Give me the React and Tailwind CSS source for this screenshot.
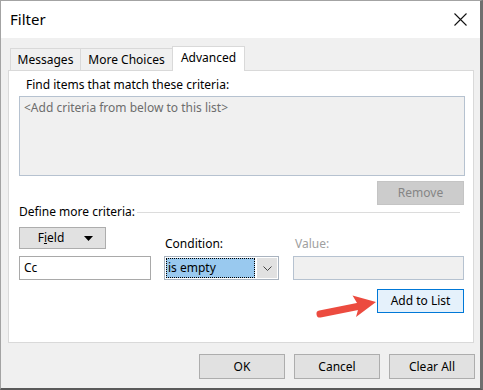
import React from 'react';

const BTN = 'flex items-center justify-center border border-[#adadad] bg-[#e1e1e1] text-black';

function CloseIcon() {
  return (
    <svg width="13" height="13" viewBox="0 0 13 13">
      <path d="M0.5 0.5 L12.5 12.5 M12.5 0.5 L0.5 12.5" stroke="#111" strokeWidth="1.1" />
    </svg>
  );
}

function RedArrow() {
  return (
    <svg
      className="absolute left-[309px] top-[289px]"
      width="70"
      height="30"
      viewBox="0 0 70 30"
    >
      <path d="M10 24 L50 16" stroke="#ec4b3f" strokeWidth="7" strokeLinecap="round" />
      <path d="M66 12 L46 27 L49 16.3 L42.5 5.5 Z" fill="#ec4b3f" />
    </svg>
  );
}

export default function App() {
  return (
    <div className="relative w-[483px] h-[390px] flex flex-col bg-[#f0f0f0] border-l border-t border-[#a3a3a3] border-r-[3px] border-r-[#6f6f6f] border-b-2 border-b-[#5a5a5a] font-['Noto_Sans',sans-serif] text-[12px] text-black overflow-hidden">
      {/* title bar */}
      <div className="h-[37px] shrink-0 bg-white flex items-center justify-between pl-[9px] pr-[13px]">
        <span className="text-[15px] leading-none">Filter</span>
        <CloseIcon />
      </div>

      {/* tabs */}
      <div className="h-[32px] shrink-0 flex items-end pl-[9px]">
        <div className="w-[70px] h-[22px] border-l border-t border-[#d9d9d9] flex items-center justify-center">
          Messages
        </div>
        <div className="w-[92px] h-[22px] border-l border-t border-[#d9d9d9] flex items-center justify-center">
          More Choices
        </div>
        <div className="relative z-10 -mb-px w-[73px] h-[25px] border-l border-t border-r border-[#d9d9d9] bg-white flex items-start justify-center pt-[2px]">
          Advanced
        </div>
      </div>

      {/* tab panel */}
      <div className="ml-[7px] w-[466px] h-[273px] shrink-0 border border-[#d9d9d9] bg-white flex flex-col">
        <div className="mt-[6px] ml-[17px] leading-[16px]">Find items that match these criteria:</div>
        <div className="mt-[3px] ml-[10px] w-[446px] h-[80px] border border-[#b6c2d0] bg-[#f0f0f0] pl-[4px] pt-[3px] text-[#6d6d6d] leading-[16px]">
          &lt;Add criteria from below to this list&gt;
        </div>
        <div className="self-end mt-[5px] mr-[9px] w-[87px] h-[24px] flex items-center justify-center border border-[#c4c4c4] bg-[#cccccc] text-[#858585]">
          Remove
        </div>

        <div className="h-[14px] mt-0 ml-[10px] mr-[13px] flex items-center gap-[2px] leading-[14px]">
          <span>Define more criteria:</span>
          <div className="flex-1 h-px bg-[#dcdcdc]" />
        </div>

        <div className="mt-[8px] ml-[10px] flex">
          <div className="w-[132px] flex flex-col">
            <div className="h-[25px]">
              <div className={`${BTN} w-[87px] h-[22px] gap-[20px] pl-[6px]`}>
                <span>
                  F<span className="underline">i</span>eld
                </span>
                <svg width="9" height="5" viewBox="0 0 9 5">
                  <path d="M0 0 L9 0 L4.5 5 Z" fill="#000" />
                </svg>
              </div>
            </div>
            <div className="mt-[4px] h-[24px] border border-[#a9a9a9] bg-white flex items-center pl-[4px]">
              Cc
            </div>
          </div>

          <div className="ml-[13px] w-[115px] flex flex-col">
            <div className="h-[25px] flex items-end leading-[16px] pl-[1px]">Condition:</div>
            <div className="mt-[4px] h-[24px] border border-[#a9b3bf] bg-white flex p-[1px]">
              <div className="flex-1 bg-[#99c9ef] border border-dotted border-black flex items-center pl-[1px]">
                is empty
              </div>
              <div className="ml-[2px] w-[20px] bg-[#e1e1e1] flex items-center justify-center">
                <svg width="9" height="5" viewBox="0 0 9 5">
                  <path d="M0.5 0.5 L4.5 4.5 L8.5 0.5" stroke="#444" strokeWidth="1" fill="none" />
                </svg>
              </div>
            </div>
          </div>

          <div className="ml-[14px] w-[171px] flex flex-col">
            <div className="h-[25px] flex items-end leading-[16px] pl-[2px] text-[#a0a0a0]">Value:</div>
            <div className="mt-[4px] h-[24px] border border-[#b6c2d0] bg-[#f0f0f0]" />
          </div>
        </div>

        <div className="self-end mt-[9px] mr-[9px] w-[87px] h-[24px] flex items-center justify-center border border-[#0078d7] bg-[#e5f1fb]">
          Add to List
        </div>
      </div>

      {/* footer buttons */}
      <div className="mt-[11px] flex justify-end gap-[9px] pr-[5px]">
        <div className={`${BTN} w-[86px] h-[25px]`}>OK</div>
        <div className={`${BTN} w-[86px] h-[25px]`}>Cancel</div>
        <div className={`${BTN} w-[86px] h-[25px]`}>Clear All</div>
      </div>

      <RedArrow />
    </div>
  );
}
